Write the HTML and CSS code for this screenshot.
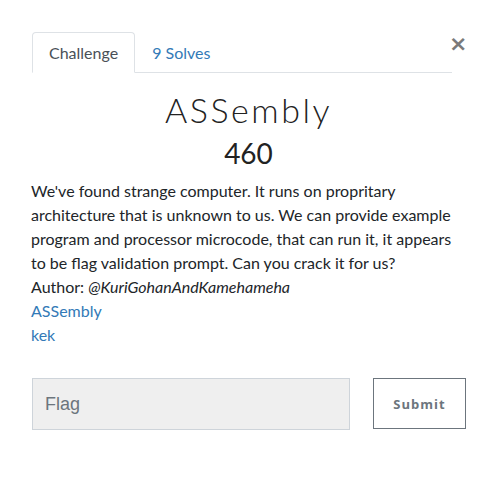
FILE: index.html
```html
<!DOCTYPE html>
<html>
<head>
<meta charset="utf-8">
<link rel="stylesheet" href="styles.css">
</head>
<body>
<div class="modal">
  <button class="close" aria-label="Close">&times;</button>
  <ul class="tabs">
    <li class="tab active">Challenge</li>
    <li class="tab">9 Solves</li>
  </ul>
  <h2 class="title">ASSembly</h2>
  <h3 class="points">460</h3>
  <div class="desc">
    <p>We've found strange computer. It runs on propritary architecture that is unknown to us. We can provide example program and processor microcode, that can run it, it appears to be flag validation prompt. Can you crack it for us?</p>
    <p>Author: <em>@KuriGohanAndKamehameha</em></p>
    <p><a href="#">ASSembly</a></p>
    <p><a href="#">kek</a></p>
  </div>
  <div class="form-row">
    <input class="flag" type="text" placeholder="Flag">
    <button class="submit">Submit</button>
  </div>
</div>
</body>
</html>
```

FILE: styles.css
```css
html, body {
  margin: 0;
  padding: 0;
  background: #fff;
}
.modal {
  position: relative;
  width: 497px;
  padding: 32px 31px 0 31px;
  box-sizing: border-box;
  font-family: Lato, "Noto Sans", sans-serif;
  font-size: 16px;
  line-height: 24px;
  color: #212529;
}
.close {
  position: absolute;
  top: 32px;
  left: 449px;
  border: 0;
  background: none;
  padding: 0;
  font-family: "DejaVu Sans", sans-serif;
  font-size: 22px;
  font-weight: bold;
  line-height: 24px;
  color: #7a7a7a;
}
.tabs {
  list-style: none;
  margin: 0 14px 0 1px;
  padding: 0;
  display: flex;
  border-bottom: 1px solid #dee2e6;
}
.tab {
  padding: 8px 16px;
  margin-bottom: -1px;
  border: 1px solid transparent;
  border-radius: 4px 4px 0 0;
  color: #337ab7;
  line-height: 23px;
}
.tab.active {
  color: #495057;
  border-color: #dee2e6 #dee2e6 #fff;
  background: #fff;
}
.title {
  margin: 15px 0 0 0;
  text-align: center;
  font-family: Lato, sans-serif;
  font-weight: 300;
  font-size: 34px;
  letter-spacing: 2.5px;
  line-height: 44px;
  color: #222;
}
.points {
  margin: 2px 0 0 0;
  text-align: center;
  font-weight: 400;
  font-size: 28px;
  line-height: 38px;
  color: #222;
}
.desc {
  margin-top: 7px;
}
.desc p {
  margin: 0;
}
.desc a {
  color: #337ab7;
  text-decoration: none;
}
.form-row {
  display: flex;
  align-items: flex-start;
  margin-top: 31px;
  margin-left: 1px;
}
.flag {
  width: 318px;
  height: 52px;
  box-sizing: border-box;
  border: 1px solid #ced4da;
  background: #efefef;
  padding: 0 12px;
  font-family: "Liberation Sans", Arial, sans-serif;
  font-size: 18px;
  color: #495057;
}
.flag::placeholder {
  color: #6c757d;
}
.submit {
  margin-left: 23px;
  width: 93px;
  height: 51px;
  box-sizing: border-box;
  border: 1px solid #6c757d;
  background: #fff;
  font-family: "Open Sans", sans-serif;
  font-weight: 700;
  font-size: 13px;
  letter-spacing: 1px;
  color: #6c757d;
}
```
